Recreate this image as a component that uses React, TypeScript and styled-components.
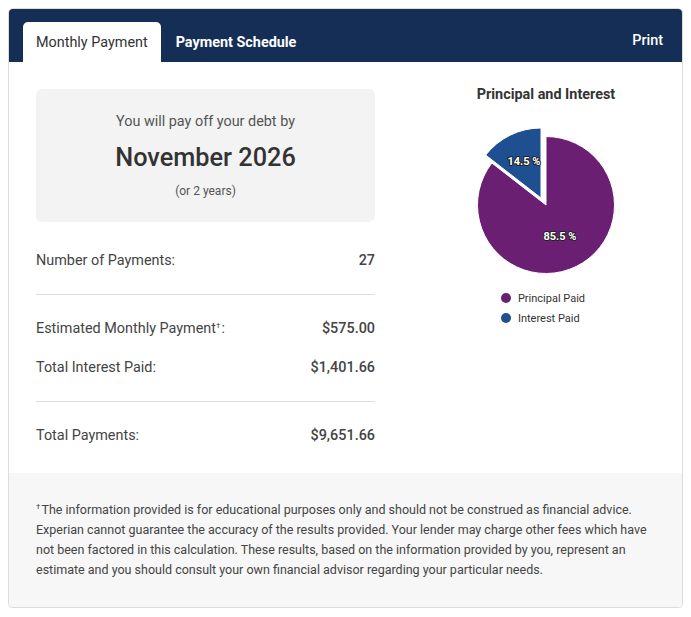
import styled, { createGlobalStyle } from 'styled-components';

const GlobalStyle = createGlobalStyle`
  body {
    margin: 8px;
    font-family: Roboto, "Liberation Sans", Arial, sans-serif;
    color: #333;
    background: #fff;
  }
`;

const summaryRows = [
  [{ label: 'Number of Payments:', value: '27' }],
  [
    { label: 'Estimated Monthly Payment', sup: true, value: '$575.00' },
    { label: 'Total Interest Paid:', value: '$1,401.66' },
  ],
  [{ label: 'Total Payments:', value: '$9,651.66' }],
];

const PieChart = () => (
  <svg width="180" height="180" viewBox="0 0 180 180">
    <path
      d="M90,100 L90,31.5 A68.5,68.5 0 1 1 35.87,58.02 Z"
      fill="#6b1f73"
      stroke="#fff"
      strokeWidth="1"
    />
    <path
      d="M85,93 L29.7,50.1 A70,70 0 0 1 85,23 Z"
      fill="#1d4f91"
      stroke="#fff"
      strokeWidth="1"
    />
    <SliceLabel x="68" y="56">14.5 %</SliceLabel>
    <SliceLabel x="104" y="131">85.5 %</SliceLabel>
  </svg>
);

export default function App() {
  return (
    <>
      <GlobalStyle />
      <Card>
        <Header>
          <Tabs>
            <Tab $active>Monthly Payment</Tab>
            <Tab>Payment Schedule</Tab>
          </Tabs>
          <PrintLink>Print</PrintLink>
        </Header>
        <Body>
          <LeftCol>
            <PayoffBox>
              <PayoffIntro>You will pay off your debt by</PayoffIntro>
              <PayoffDate>November 2026</PayoffDate>
              <PayoffYears>(or 2 years)</PayoffYears>
            </PayoffBox>
            {summaryRows.map((group, gi) => (
              <Section key={gi}>
                {group.map((row) => (
                  <Row key={row.label}>
                    <RowLabel>
                      {row.label}
                      {row.sup && (
                        <>
                          <Dagger>†</Dagger>:
                        </>
                      )}
                    </RowLabel>
                    <RowValue>{row.value}</RowValue>
                  </Row>
                ))}
              </Section>
            ))}
          </LeftCol>
          <ChartCol>
            <ChartTitle>Principal and Interest</ChartTitle>
            <PieChart />
            <Legend>
              <LegendItem>
                <LegendDot $color="#6b1f73" />
                Principal Paid
              </LegendItem>
              <LegendItem>
                <LegendDot $color="#1d4f91" />
                Interest Paid
              </LegendItem>
            </Legend>
          </ChartCol>
        </Body>
        <Disclaimer>
          <Dagger>†</Dagger>The information provided is for educational purposes only and should not be
          construed as financial advice. Experian cannot guarantee the accuracy of the results
          provided. Your lender may charge other fees which have not been factored in this
          calculation. These results, based on the information provided by you, represent an
          estimate and you should consult your own financial advisor regarding your particular
          needs.
        </Disclaimer>
      </Card>
    </>
  );
}

const Card = styled.div`
  border: 1px solid #dcdcdc;
  border-radius: 5px;
  overflow: hidden;
  box-shadow: 0 1px 2px rgba(0, 0, 0, 0.08);
`;

const Header = styled.div`
  background: #142e55;
  height: 53px;
  display: flex;
  align-items: flex-end;
  justify-content: space-between;
  padding: 0 19px 0 14px;
`;

const Tabs = styled.div`
  display: flex;
  align-items: flex-end;
`;

const Tab = styled.div<{ $active?: boolean }>`
  height: 40px;
  display: flex;
  align-items: center;
  padding: 0 13px;
  margin-right: 2px;
  border-radius: 5px 5px 0 0;
  font-size: 14.4px;
  font-weight: ${(p) => (p.$active ? 400 : 700)};
  color: ${(p) => (p.$active ? '#333' : '#fff')};
  background: ${(p) => (p.$active ? '#fff' : 'transparent')};
`;

const PrintLink = styled.div`
  height: 40px;
  display: flex;
  align-items: center;
  font-size: 14.4px;
  font-weight: 500;
  color: #fff;
  margin-bottom: 2px;
`;

const Body = styled.div`
  display: grid;
  grid-template-columns: 339px 1fr;
  column-gap: 35px;
  padding: 27px 0 4px 27px;
`;

const LeftCol = styled.div`
  display: flex;
  flex-direction: column;
`;

const PayoffBox = styled.div`
  background: #f3f3f3;
  border-radius: 6px;
  height: 133px;
  margin-bottom: 5px;
  display: flex;
  flex-direction: column;
  align-items: center;
  justify-content: center;
  text-align: center;
`;

const PayoffIntro = styled.div`
  font-size: 14.4px;
  line-height: 18px;
  color: #555;
`;

const PayoffDate = styled.div`
  font-size: 25.3px;
  line-height: 30px;
  font-weight: 500;
  color: #333;
  margin: 12px 0 10px;
`;

const PayoffYears = styled.div`
  font-size: 12px;
  line-height: 16px;
  color: #555;
`;

const Section = styled.div`
  padding: 14px 0;
  & + & {
    border-top: 1px solid #dedede;
  }
`;

const Row = styled.div`
  display: flex;
  justify-content: space-between;
  align-items: center;
  padding: 10px 0;
  font-size: 14.4px;
  line-height: 19px;
`;

const RowLabel = styled.span`
  color: #444;
`;

const RowValue = styled.span`
  font-weight: 500;
  color: #444;
`;

const Dagger = styled.sup`
  font-size: 8px;
  line-height: 0;
  vertical-align: 5px;
  margin-right: 1px;
`;

const ChartCol = styled.div`
  display: flex;
  flex-direction: column;
  align-items: center;
`;

const ChartTitle = styled.div`
  margin-top: -2px;
  font-size: 14.4px;
  line-height: 16px;
  font-weight: 700;
  color: #333;
  margin-bottom: 2px;
`;

const SliceLabel = styled.text`
  font-family: Roboto, "Liberation Sans", Arial, sans-serif;
  font-size: 11px;
  font-weight: 700;
  fill: #fff;
  stroke: #222;
  stroke-width: 2px;
  stroke-linejoin: round;
  paint-order: stroke;
  text-anchor: middle;
  dominant-baseline: central;
`;

const Legend = styled.div`
  display: grid;
  justify-content: center;
  margin: 3px 0 0 -6px;
`;

const LegendItem = styled.div`
  display: flex;
  align-items: center;
  gap: 7px;
  height: 20px;
  font-size: 11px;
  color: #333;
`;

const LegendDot = styled.span<{ $color: string }>`
  width: 10px;
  height: 10px;
  border-radius: 50%;
  background: ${(p) => p.$color};
`;

const Disclaimer = styled.div`
  background: #f7f7f7;
  padding: 27px;
  font-size: 12.5px;
  line-height: 20px;
  color: #444;
`;
